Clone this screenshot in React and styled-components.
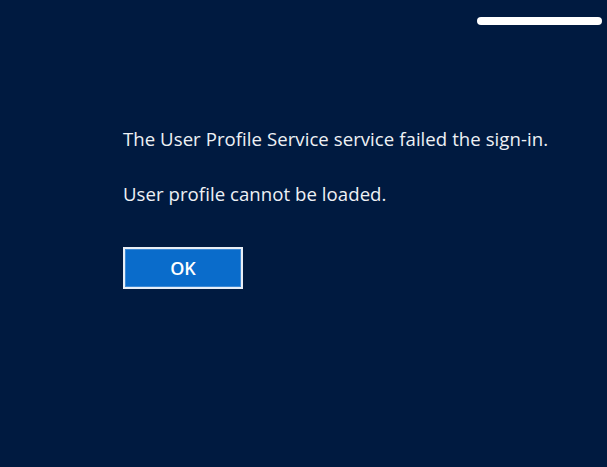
import React from 'react'
import styled, { createGlobalStyle } from 'styled-components'

const GlobalStyle = createGlobalStyle`
  html, body {
    margin: 0;
    padding: 0;
    background: #001a40;
  }
`

const Screen = styled.div`
  width: 607px;
  height: 467px;
  background: #001a40;
  display: flex;
  flex-direction: column;
  font-family: "Open Sans", "Noto Sans", sans-serif;
  color: #eef1f5;
  overflow: hidden;
`

const TopBar = styled.div`
  display: flex;
  justify-content: flex-end;
  padding: 17px 5px 0 0;
`

const Indicator = styled.div`
  width: 125px;
  height: 8px;
  border-radius: 4px;
  background: #ffffff;
`

const Message = styled.div`
  display: flex;
  flex-direction: column;
  align-items: flex-start;
  padding: 102px 0 0 123px;
`

const Line = styled.p`
  margin: 0 0 ${(p) => p.gap || 0}px 0;
  font-size: 18.6px;
  line-height: 24px;
  letter-spacing: 0.05px;
  white-space: nowrap;
`

const OkButton = styled.button`
  width: 120px;
  height: 42px;
  box-sizing: border-box;
  border: 2px solid #e8eef6;
  box-shadow: inset 0 0 0 1px #3d8ad6;
  background: #0a6ccb;
  color: #ffffff;
  font-family: "Open Sans", "Noto Sans", sans-serif;
  font-size: 18px;
  font-weight: 600;
  padding: 0;
  cursor: pointer;
`

export default function App() {
  return (
    <>
      <GlobalStyle />
      <Screen>
        <TopBar>
          <Indicator />
        </TopBar>
        <Message>
          <Line gap={31}>The User Profile Service service failed the sign-in.</Line>
          <Line gap={41}>User profile cannot be loaded.</Line>
          <OkButton>OK</OkButton>
        </Message>
      </Screen>
    </>
  )
}
